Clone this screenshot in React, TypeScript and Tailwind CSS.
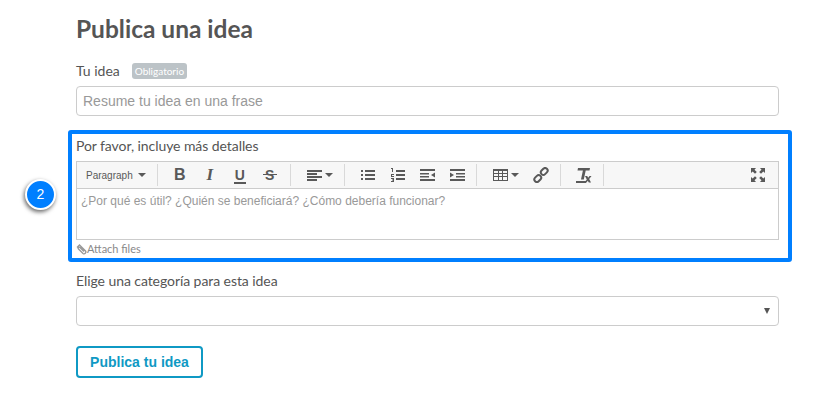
const Sep = ({ className }: { className: string }) => <div className={`h-[22px] w-px shrink-0 bg-[#d9d9d9] ${className}`} />

const Caret = () => (
  <svg width="8" height="4" viewBox="0 0 8 4" className="shrink-0">
    <path d="M0 0h8L4 4z" fill="#595959" />
  </svg>
)

const Glyph = ({ className, children }: { className: string; children: React.ReactNode }) => (
  <span className={`relative flex h-5 w-[30px] shrink-0 items-center justify-center text-[#595959] ${className}`}>{children}</span>
)

const Icon = ({ children, w = 16 }: { children: React.ReactNode; w?: number }) => (
  <svg width={w} height="16" viewBox={`0 0 ${w} 16`} fill="#595959" className="shrink-0">
    {children}
  </svg>
)

export default function App() {
  return (
    <div className="relative h-[400px] w-[836px] overflow-hidden bg-white font-['Lato',sans-serif] text-[#555555]">
      <div className="w-[703px] ml-[76px] pt-[14px]">
        <h1 className="text-[24.5px] font-bold leading-[30px] text-[#555555]">Publica una idea</h1>

        <div className="mt-[17px] flex h-[20px] items-center">
          <label className="text-[14px] leading-[20px]">Tu idea</label>
          <span className="ml-[12px] rounded-[3px] bg-[#bcc3c7] px-[3px] text-[10px] leading-[16px] text-white">Obligatorio</span>
        </div>
        <div className="mt-[5px] flex h-[30px] items-center rounded-[4px] border border-[#cccccc] px-[6px] font-['Liberation_Sans',sans-serif] text-[14px] text-[#999999]">
          Resume tu idea en una frase
        </div>

        <label className="mt-[20px] block text-[14px] leading-[20px] tracking-[-0.07px]">Por favor, incluye más detalles</label>
        <div className="mt-[5px] border border-[#cccccc]">
          <div className="flex h-[27px] items-center border-b border-[#cccccc] bg-[#f7f7f7]">
            <span className="ml-[9px] font-['Liberation_Sans',sans-serif] text-[10px] text-[#595959]">Paragraph</span>
            <span className="ml-[5px]"><Caret /></span>
            <Sep className="ml-[11px]" />
            <Glyph className="ml-[7px] font-['Liberation_Sans',sans-serif] text-[16px] font-bold">B</Glyph>
            <Glyph className="font-['Liberation_Serif',serif] text-[17px] font-bold italic">I</Glyph>
            <Glyph className="font-['Liberation_Sans',sans-serif] text-[14px] font-bold">
              U
              <span className="absolute bottom-[1px] left-[9px] h-[2px] w-[12px] bg-[#595959]" />
            </Glyph>
            <Glyph className="font-['Liberation_Sans',sans-serif] text-[14px] font-bold">
              S
              <span className="absolute left-[8px] top-[9px] h-[1px] w-[14px] bg-[#595959]" />
            </Glyph>
            <Sep className="ml-[5px]" />
            <span className="ml-[16px] flex items-center gap-[2px]">
              <Icon>
                <path d="M0 3h15v2H0zM0 6h10v2H0zM0 9h15v2H0zM0 12h10v2H0z" />
              </Icon>
              <Caret />
            </span>
            <Sep className="ml-[11px]" />
            <span className="ml-[15px] flex items-center gap-[14px]">
              <Icon>
                <path d="M1 3h2v2H1zM5 3h10v2H5zM1 7h2v2H1zM5 7h10v2H5zM1 11h2v2H1zM5 11h10v2H5z" />
              </Icon>
              <Icon>
                <path d="M1 1h2v4H2V2H1zM1 7h3v1H2v1h2v1H1zM1 11h3v4H1v-1h2v-.5H2v-1h1V12H1zM6 3h9v2H6zM6 7h9v2H6zM6 11h9v2H6z" />
              </Icon>
              <Icon>
                <path d="M0 2h15v2H0zM0 6h9v1.500H0zM0 9h9v1.500H0zM0 12h15v2H0zM15 5.500v5L11 8z" />
              </Icon>
              <Icon>
                <path d="M0 2h15v2H0zM6 6h9v1.500H6zM6 9h9v1.500H6zM0 12h15v2H0zM0 5.500v5L4 8z" />
              </Icon>
            </span>
            <Sep className="ml-[10px]" />
            <span className="ml-[16px] flex items-center gap-[2px]">
              <Icon>
                <path fillRule="evenodd" d="M0 2h15v12H0zM1 4v2h4V4zM6 4v2h3V4zM10 4v2h4V4zM1 7v2h4V7zM6 7v2h3V7zM10 7v2h4V7zM1 10v3h4v-3zM6 10v3h3v-3zM10 10v3h4v-3z" />
              </Icon>
              <Caret />
            </span>
            <span className="ml-[14px] flex">
              <Icon>
                <g fill="none" stroke="#595959" strokeWidth="2">
                  <rect x="7.500" y="2" width="7.500" height="5" rx="2.500" transform="rotate(-45 11.200 4.500)" />
                  <rect x="1" y="9" width="7.500" height="5" rx="2.500" transform="rotate(-45 4.800 11.500)" />
                </g>
              </Icon>
            </span>
            <Sep className="ml-[11px]" />
            <span className="ml-[15px] flex">
              <Icon>
                <path d="M2 1h12l-.5 2.500H9.700L7.800 12.500H5L6.900 3.500H1.500zM0 14h10v2H0zM9 9h2.200l1 1.700L13.500 9H15.500l-2.300 3 1.800 3.500h-2.200l-1-1.800-1.300 1.800H8.500l2.300-3z" />
              </Icon>
            </span>
            <Sep className="ml-[11px]" />
            <span className="ml-auto mr-[12px] flex">
              <Icon>
                <path d="M1 1h5L4.500 2.700 6.800 5 5 6.800 2.700 4.500 1 6zM15 1v5l-1.700-1.500L11 6.800 9.200 5l2.300-2.300L10 1zM1 15v-5l1.700 1.500L5 9.200 6.800 11l-2.300 2.300L6 15zM15 15h-5l1.500-1.700L9.200 11 11 9.200l2.300 2.300L15 10z" />
              </Icon>
            </span>
          </div>
          <div className="h-[50px] px-[4px] pt-[4px] font-['Liberation_Sans',sans-serif] text-[12px] leading-[17px] text-[#999999]">
            ¿Por qué es útil? ¿Quién se beneficiará? ¿Cómo debería funcionar?
          </div>
        </div>
        <div className="flex h-[18px] items-center pt-[1px] text-[11px] text-[#888888]">
          <svg width="11" height="11" viewBox="0 0 11 11" fill="none" stroke="#999999" strokeWidth="1.400" className="shrink-0">
            <path d="M1 3.500L3.500 1l6 6a1.800 1.800 0 01-2.500 2.500L2.500 5A1 1 0 014 3.500l4 4" />
          </svg>
          Attach files
        </div>

        <label className="mt-[13px] block text-[14px] leading-[20px] tracking-[-0.07px]">Elige una categoría para esta idea</label>
        <div className="mt-[5px] flex h-[30px] items-center justify-end rounded-[4px] border border-[#cccccc] pr-[8px]">
          <svg width="6" height="6" viewBox="0 0 6 6" className="shrink-0">
            <path d="M0 0h6L3 6z" fill="#555555" />
          </svg>
        </div>

        <button className="mt-[20px] flex h-[32px] w-[127px] items-center justify-center rounded-[4px] border-2 border-[#0f99c4] bg-white font-['Liberation_Sans',sans-serif] text-[14px] font-bold text-[#0f99c4]">
          Publica tu idea
        </button>
      </div>

      {/* annotation */}
      <div className="absolute left-[68px] top-[130px] h-[132px] w-[724px] rounded-[3px] border-4 border-[#007fff]" />
      <div className="absolute left-[25px] top-[179px] flex h-[31px] w-[31px] items-center justify-center rounded-full border-2 border-white bg-[#007fff] font-['Liberation_Sans',sans-serif] text-[14px] text-white shadow-[-1px_2px_4px_rgba(0,0,0,0.6)]">
        2
      </div>
    </div>
  )
}
